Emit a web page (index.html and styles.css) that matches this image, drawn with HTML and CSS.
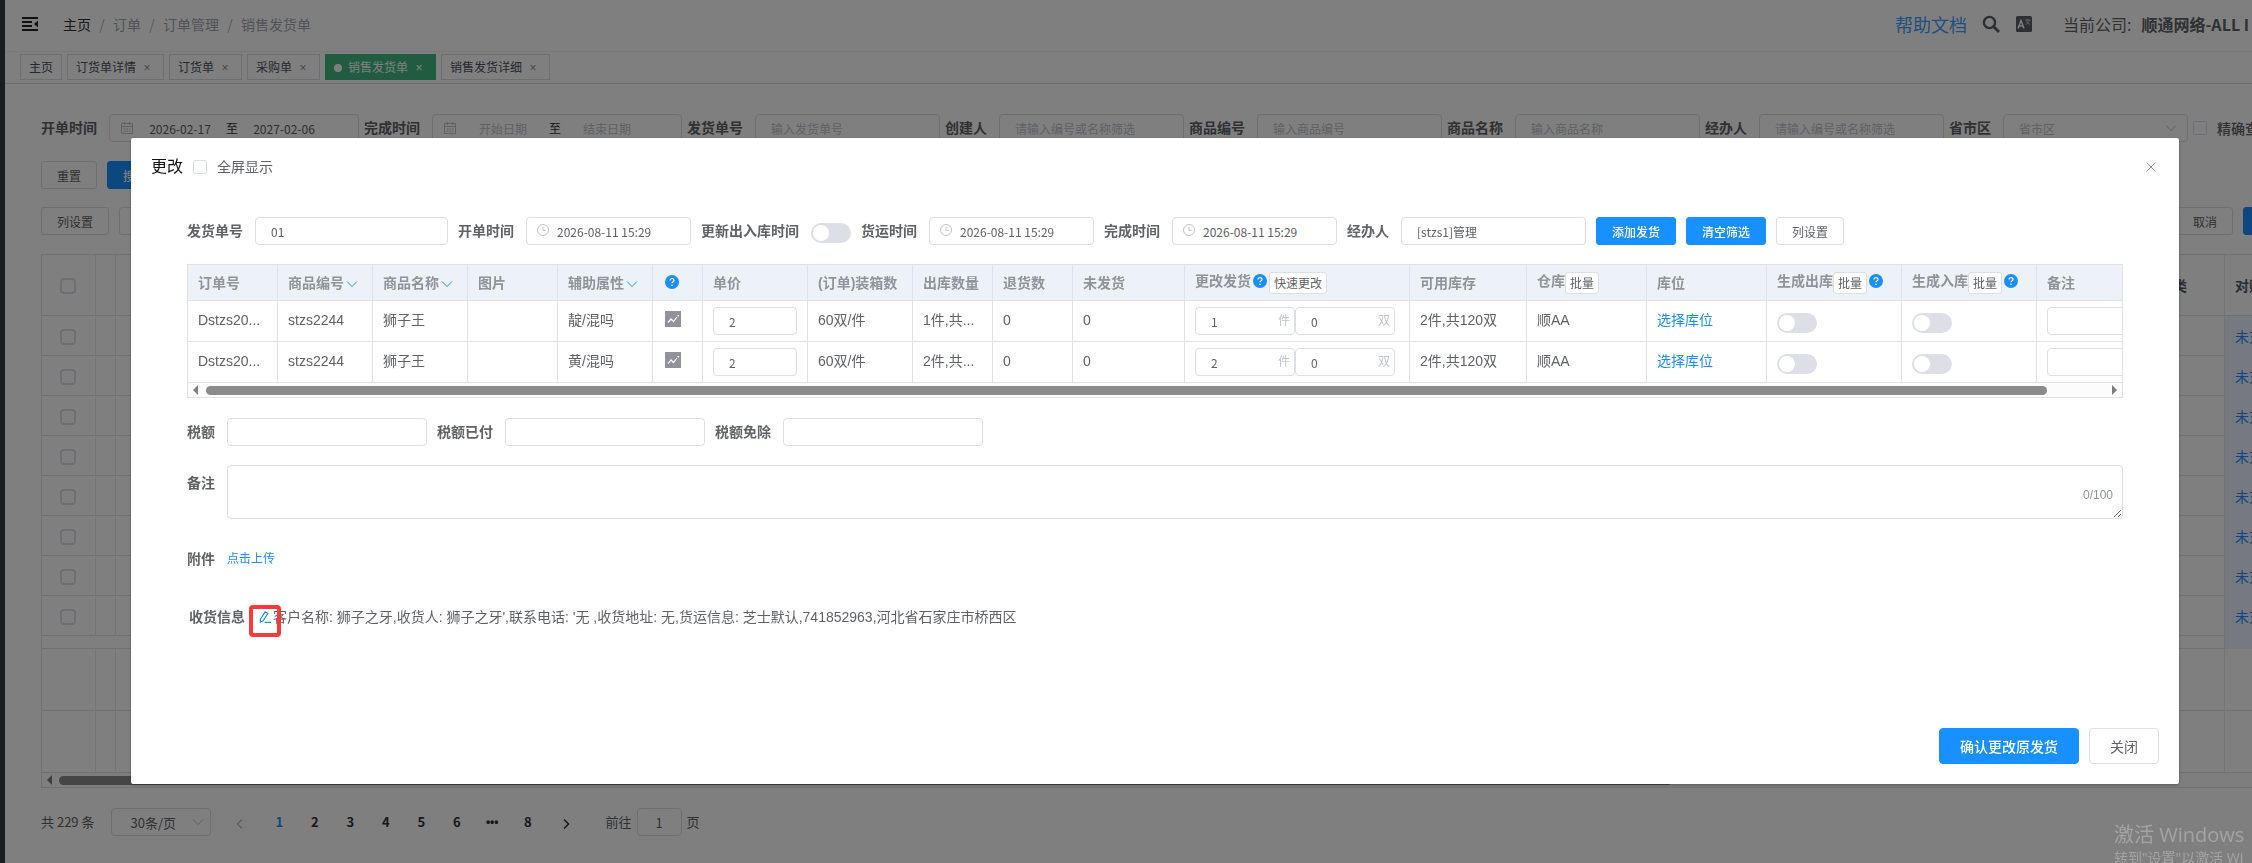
FILE: index.html
```
<!DOCTYPE html>
<html lang="zh-CN">
<head>
    <meta charset="UTF-8">
    <meta name="viewport" content="width=device-width, initial-scale=1.0">
    <title>销售发货单</title>

    <link rel="stylesheet" href="styles.css">
</head>

<body>

    <!-- shared icons -->
    <svg class="sprite" aria-hidden="true">
        <symbol id="i-clock" viewBox="0 0 14 14"><circle cx="7" cy="7" r="5.5" fill="none" stroke="currentColor"/><path d="M7 3.8v3.7h2.6" fill="none" stroke="currentColor"/></symbol>
        <symbol id="i-date" viewBox="0 0 14 14"><path d="M1.5 2.5h11v10h-11zM1.5 5.5h11M4.5 1v3M9.5 1v3M3.5 8h2M6.2 8h2M9 8h1.5M3.5 10.3h2M6.2 10.3h2M9 10.3h1.5" fill="none" stroke="currentColor"/></symbol>
        <symbol id="i-down" viewBox="0 0 14 14"><path d="M2 4.5l5 5 5-5" fill="none" stroke="currentColor"/></symbol>
        <symbol id="i-help" viewBox="0 0 14 14"><circle cx="7" cy="7" r="7" fill="#1890ff"/><path d="M5 5.6C5 4.300 5.900 3.600 7 3.600s2 .7 2 1.800c0 1.300-2 1.400-2 2.900" fill="none" stroke="#fff" stroke-width="1.200"/><circle cx="7" cy="10.300" r=".8" fill="#fff"/></symbol>
        <symbol id="i-chart" viewBox="0 0 16 16"><path d="M0 0h16v16H0z" fill="#909399"/><path d="M3 11.500l3-3.500 2.500 2.500 3.500-4.500" fill="none" stroke="#fff" stroke-width="1.200"/><path d="M12.500 4h1.500v1.500h-1.500z" fill="#fff"/></symbol>
    </svg>

    <div class="layout">
        <aside class="sidebar"></aside>

        <div class="page">
            <header class="navbar">
                <svg class="hamburger" viewBox="0 0 16 14"><path d="M0 1h16M0 5h10M0 9h10M0 13h16" stroke="#222" stroke-width="2"/><path d="M16 3.500v7L12 7z" fill="#222"/></svg>
                <nav class="breadcrumb">
                    <a href="#" class="home">主页</a><i>/</i><span>订单</span><i>/</i><span>订单管理</span><i>/</i><span>销售发货单</span>
                </nav>
                <div class="nav-right">
                    <a href="#" class="doc-link">帮助文档</a>
                    <svg class="nav-icon" viewBox="0 0 18 18"><circle cx="7.500" cy="7.500" r="5.600" fill="none" stroke="#5a5e66" stroke-width="2.400"/><path d="M11.500 11.500l5.500 5.500" stroke="#5a5e66" stroke-width="2.800"/></svg>
                    <svg class="lang-icon" viewBox="0 0 16 16"><rect width="16" height="16" rx="1.500" fill="#5a5e66"/><path d="M2 12.500L5 4.500l3 8M3 10h4" fill="none" stroke="#fff" stroke-width="1.400"/><path d="M9 4h5.500M11.700 2.800V4M9.700 8.300c2-.9 3.300-2.300 3.600-4.300M10.300 4.500c.5 1.800 1.800 3 3.800 3.800" fill="none" stroke="#ddd" stroke-width=".8"/></svg>
                    <span class="company">当前公司:</span>
                    <b class="company-name">顺通网络-ALL I</b>
                </div>
            </header>

            <div class="tags">
                <a href="#" class="tag">主页</a>
                <a href="#" class="tag">订货单详情<i>×</i></a>
                <a href="#" class="tag">订货单<i>×</i></a>
                <a href="#" class="tag">采购单<i>×</i></a>
                <a href="#" class="tag active">销售发货单<i>×</i></a>
                <a href="#" class="tag">销售发货详细<i>×</i></a>
            </div>

            <main class="content">
                <div class="filters">
                    <div class="field">
                        <label for="fOpen">开单时间</label>
                        <div class="range"><svg><use href="#i-date"/></svg><input id="fOpen" type="text" value="2026-02-17"><span>至</span><input type="text" value="2027-02-06" aria-label="开单时间"></div>
                    </div>
                    <div class="field">
                        <label for="fDone">完成时间</label>
                        <div class="range"><svg><use href="#i-date"/></svg><input id="fDone" type="text" placeholder="开始日期"><span>至</span><input type="text" placeholder="结束日期" aria-label="完成时间"></div>
                    </div>
                    <div class="field"><label for="fNo">发货单号</label><input id="fNo" class="input w185" type="text" placeholder="输入发货单号"></div>
                    <div class="field"><label for="fMaker">创建人</label><input id="fMaker" class="input w185" type="text" placeholder="请输入编号或名称筛选"></div>
                    <div class="field"><label for="fCode">商品编号</label><input id="fCode" class="input w185" type="text" placeholder="输入商品编号"></div>
                    <div class="field"><label for="fName">商品名称</label><input id="fName" class="input w185" type="text" placeholder="输入商品名称"></div>
                    <div class="field"><label for="fAgent">经办人</label><input id="fAgent" class="input w185" type="text" placeholder="请输入编号或名称筛选"></div>
                    <div class="field">
                        <label for="fArea">省市区</label>
                        <div class="select w185"><select id="fArea" class="empty"><option>省市区</option></select><svg><use href="#i-down"/></svg></div>
                    </div>
                    <label class="check"><input type="checkbox">精确查</label>
                </div>

                <div class="btn-row search-row">
                    <button class="btn">重置</button>
                    <button class="btn primary">搜索</button>
                </div>

                <div class="btn-row tool-row">
                    <button class="btn">列设置</button>
                    <button class="btn">导出</button>
                    <button class="btn push">取消</button>
                    <button class="btn primary">确定</button>
                </div>

                <div class="list">
                    <table class="list-table">
                        <colgroup><col class="c-check"><col class="c-tree"><col><col class="c-type"><col class="c-state"></colgroup>
                        <thead>
                            <tr><th><input type="checkbox" aria-label="全选"></th><th></th><th></th><th>分类</th><th>对账</th></tr>
                        </thead>
                        <tbody>
                            <tr><td><input type="checkbox" aria-label="选择"></td><td></td><td></td><td></td><td class="state"><a href="#">未对</a></td></tr>
                            <tr><td><input type="checkbox" aria-label="选择"></td><td></td><td></td><td></td><td class="state"><a href="#">未对</a></td></tr>
                            <tr><td><input type="checkbox" aria-label="选择"></td><td></td><td></td><td></td><td class="state"><a href="#">未对</a></td></tr>
                            <tr><td><input type="checkbox" aria-label="选择"></td><td></td><td></td><td></td><td class="state"><a href="#">未对</a></td></tr>
                            <tr><td><input type="checkbox" aria-label="选择"></td><td></td><td></td><td></td><td class="state"><a href="#">未对</a></td></tr>
                            <tr><td><input type="checkbox" aria-label="选择"></td><td></td><td></td><td></td><td class="state"><a href="#">未对</a></td></tr>
                            <tr><td><input type="checkbox" aria-label="选择"></td><td></td><td></td><td></td><td class="state"><a href="#">未对</a></td></tr>
                            <tr><td><input type="checkbox" aria-label="选择"></td><td></td><td></td><td></td><td class="state"><a href="#">未对</a></td></tr>
                            <tr class="gap-row"><td colspan="4"></td><td class="state"></td></tr>
                        </tbody>
                        <tfoot>
                            <tr><td></td><td></td><td></td><td></td><td></td></tr>
                            <tr><td></td><td></td><td></td><td></td><td></td></tr>
                        </tfoot>
                    </table>
                    <div class="scrollbar list-scroll"><i class="arrow-left"></i><span class="thumb"></span></div>
                </div>

                <div class="pagination">
                    <span class="total">共 229 条</span>
                    <div class="select size"><select aria-label="每页条数"><option>30条/页</option></select><svg><use href="#i-down"/></svg></div>
                    <button class="pager-arrow" disabled aria-label="上一页"><svg viewBox="0 0 12 12"><path d="M8 1.500L3.500 6 8 10.500" fill="none" stroke="currentColor" stroke-width="1.500"/></svg></button>
                    <ul class="pager">
                        <li class="active">1</li><li>2</li><li>3</li><li>4</li><li>5</li><li>6</li><li class="more">•••</li><li>8</li>
                    </ul>
                    <button class="pager-arrow" aria-label="下一页"><svg viewBox="0 0 12 12"><path d="M4 1.500L8.500 6 4 10.500" fill="none" stroke="currentColor" stroke-width="1.500"/></svg></button>
                    <label class="jump">前往<input type="text" value="1">页</label>
                </div>
            </main>
        </div>
    </div>

    <div class="overlay">
        <div class="dialog" role="dialog" aria-labelledby="dlgTitle">
            <div class="dialog-header">
                <span id="dlgTitle" class="dialog-title">更改</span>
                <label class="check"><input type="checkbox">全屏显示</label>
                <button class="close" aria-label="关闭"><svg viewBox="0 0 10 10"><path d="M.5.5l9 9M9.500.5l-9 9" stroke="#909399" fill="none"/></svg></button>
            </div>

            <div class="dialog-body">
                <div class="form-row">
                    <div class="field"><label for="no">发货单号</label><input id="no" class="input w193" type="text" value="01"></div>
                    <div class="field"><label for="openTime">开单时间</label><div class="time"><svg><use href="#i-clock"/></svg><input id="openTime" class="input" type="text" value="2026-08-11 15:29"></div></div>
                    <div class="field"><label for="upd">更新出入库时间</label><input id="upd" class="switch" type="checkbox"></div>
                    <div class="field"><label for="shipTime">货运时间</label><div class="time"><svg><use href="#i-clock"/></svg><input id="shipTime" class="input" type="text" value="2026-08-11 15:29"></div></div>
                    <div class="field"><label for="doneTime">完成时间</label><div class="time"><svg><use href="#i-clock"/></svg><input id="doneTime" class="input" type="text" value="2026-08-11 15:29"></div></div>
                    <div class="field"><label for="agent">经办人</label><input id="agent" class="input w185" type="text" value="[stzs1]管理"></div>
                    <button class="btn primary">添加发货</button>
                    <button class="btn primary">清空筛选</button>
                    <button class="btn">列设置</button>
                </div>

                <div class="goods">
                    <div class="goods-view">
                        <table class="goods-table">
                            <colgroup>
                                <col class="w90"><col class="w95"><col class="w95"><col class="w90"><col class="w95"><col class="w50"><col class="w105"><col class="w105"><col class="w80"><col class="w80"><col class="w112"><col class="w225"><col class="w117"><col class="w120"><col class="w120"><col class="w135"><col class="w135"><col>
                            </colgroup>
                            <thead>
                                <tr>
                                    <th>订单号</th>
                                    <th>商品编号<svg class="sort"><use href="#i-down"/></svg></th>
                                    <th>商品名称<svg class="sort"><use href="#i-down"/></svg></th>
                                    <th>图片</th>
                                    <th>辅助属性<svg class="sort"><use href="#i-down"/></svg></th>
                                    <th><svg class="help"><use href="#i-help"/></svg></th>
                                    <th>单价</th>
                                    <th>(订单)装箱数</th>
                                    <th>出库数量</th>
                                    <th>退货数</th>
                                    <th>未发货</th>
                                    <th>更改发货<svg class="help"><use href="#i-help"/></svg><button class="mini">快速更改</button></th>
                                    <th>可用库存</th>
                                    <th>仓库<button class="mini">批量</button></th>
                                    <th>库位</th>
                                    <th>生成出库<button class="mini">批量</button><svg class="help"><use href="#i-help"/></svg></th>
                                    <th>生成入库<button class="mini">批量</button><svg class="help"><use href="#i-help"/></svg></th>
                                    <th>备注</th>
                                </tr>
                            </thead>
                            <tbody>
                                <tr>
                                    <td>Dstzs20...</td>
                                    <td>stzs2244</td>
                                    <td>狮子王</td>
                                    <td></td>
                                    <td>靛/混吗</td>
                                    <td><svg class="chart"><use href="#i-chart"/></svg></td>
                                    <td class="edit-cell"><input class="input" type="text" value="2" aria-label="单价"></td>
                                    <td>60双/件</td>
                                    <td>1件,共...</td>
                                    <td>0</td>
                                    <td>0</td>
                                    <td class="edit-cell"><div class="qty"><label><input class="input" type="text" value="1"><span>件</span></label><label><input class="input" type="text" value="0"><span>双</span></label></div></td>
                                    <td>2件,共120双</td>
                                    <td>顺AA</td>
                                    <td><a href="#">选择库位</a></td>
                                    <td class="edit-cell"><input class="switch" type="checkbox" aria-label="生成出库"></td>
                                    <td class="edit-cell"><input class="switch" type="checkbox" aria-label="生成入库"></td>
                                    <td class="edit-cell"><input class="input" type="text" aria-label="备注"></td>
                                </tr>
                                <tr>
                                    <td>Dstzs20...</td>
                                    <td>stzs2244</td>
                                    <td>狮子王</td>
                                    <td></td>
                                    <td>黄/混吗</td>
                                    <td><svg class="chart"><use href="#i-chart"/></svg></td>
                                    <td class="edit-cell"><input class="input" type="text" value="2" aria-label="单价"></td>
                                    <td>60双/件</td>
                                    <td>2件,共...</td>
                                    <td>0</td>
                                    <td>0</td>
                                    <td class="edit-cell"><div class="qty"><label><input class="input" type="text" value="2"><span>件</span></label><label><input class="input" type="text" value="0"><span>双</span></label></div></td>
                                    <td>2件,共120双</td>
                                    <td>顺AA</td>
                                    <td><a href="#">选择库位</a></td>
                                    <td class="edit-cell"><input class="switch" type="checkbox" aria-label="生成出库"></td>
                                    <td class="edit-cell"><input class="switch" type="checkbox" aria-label="生成入库"></td>
                                    <td class="edit-cell"><input class="input" type="text" aria-label="备注"></td>
                                </tr>
                            </tbody>
                        </table>
                    </div>
                    <div class="scrollbar goods-scroll"><i class="arrow-left"></i><div class="track"><span class="thumb"></span></div><i class="arrow-right"></i></div>
                </div>

                <div class="form-row tax-row">
                    <div class="field"><label for="tax">税额</label><input id="tax" class="input w200" type="text"></div>
                    <div class="field"><label for="taxPaid">税额已付</label><input id="taxPaid" class="input w200" type="text"></div>
                    <div class="field"><label for="taxFree">税额免除</label><input id="taxFree" class="input w200" type="text"></div>
                </div>

                <div class="field remark">
                    <label for="remark">备注</label>
                    <div class="textarea"><textarea id="remark"></textarea><span class="count">0/100</span></div>
                </div>

                <div class="field attach">
                    <b>附件</b>
                    <a href="#">点击上传</a>
                </div>

                <div class="receiver">
                    <b>收货信息</b>
                    <button class="edit" aria-label="编辑"><svg viewBox="0 0 12 12"><path d="M1.500 8L6.200.8l2.600 1.700L4.200 9.700 1.300 11zM5.500 11.300h6.500" fill="none" stroke="#1890ff" stroke-width="1.200"/></svg><span class="mark"></span></button>
                    <span>客户名称: 狮子之牙,收货人: 狮子之牙',联系电话: '无 ,收货地址: 无,货运信息: 芝士默认,741852963,河北省石家庄市桥西区</span>
                </div>
            </div>

            <div class="dialog-footer">
                <button class="btn primary large">确认更改原发货</button>
                <button class="btn large">关闭</button>
            </div>
        </div>
    </div>

    <div class="watermark">
        <p class="wm-title">激活 Windows</p>
        <p>转到"设置"以激活 Wi</p>
    </div>

</body>
</html>
```
FILE: styles.css
```
*{
    box-sizing: border-box;
    margin: 0;
    padding: 0;
}

body{
    height: 100vh;
    overflow: hidden;
    font-family: "Liberation Sans", "Noto Sans CJK SC", sans-serif;
    font-size: 14px;
    line-height: 20px;
    color: #606266;
    background: #fff;
}

a{
    color: #1890ff;
    text-decoration: none;
}

i{
    font-style: normal;
}

input, button, select, textarea{
    font-family: "Noto Sans CJK SC", sans-serif;
    font-size: 12px;
    color: #606266;
    outline: none;
}

::placeholder{
    color: #c0c4cc;
}

.sprite{
    display: none;
}

/* layout */

.layout{
    display: flex;
    height: 100vh;
}

.sidebar{
    flex: 0 0 5px;
    background: #36383f;
}

.page{
    flex: 1;
    min-width: 0;
    overflow: hidden;
    font-family: "Noto Sans CJK SC", sans-serif;
}

.navbar{
    display: flex;
    align-items: center;
    height: 52px;
    padding: 0 0 4px 17px;
    border-bottom: 1px solid #f2f2f4;
    white-space: nowrap;
}

.hamburger{
    width: 16px;
    height: 14px;
    margin-right: 25px;
}

.breadcrumb{
    display: flex;
    color: #97a8be;
}

.breadcrumb .home{
    color: #303133;
}

.breadcrumb span{
    color: #a2a7b0;
}

.breadcrumb i{
    width: 22px;
    text-align: center;
    color: #b0b4bc;
}

.nav-right{
    display: flex;
    align-items: center;
    flex: 0 0 357px;
    margin-left: auto;
    overflow: hidden;
    font-size: 16px;
}

.doc-link{
    font-size: 18px;
    color: #409eff;
}

.nav-icon{
    width: 18px;
    height: 18px;
    margin-left: 15px;
}

.lang-icon{
    width: 16px;
    height: 16px;
    margin: 0 31px 0 16px;
}

.company-name{
    margin-left: 10px;
}

.tags{
    display: flex;
    gap: 5px;
    height: 32px;
    padding: 2px 15px 0;
    border-bottom: 1px solid #d8dce5;
}

.tag{
    height: 26px;
    padding: 0 8px;
    border: 1px solid #d8dce5;
    font-size: 12px;
    line-height: 24px;
    color: #495060;
}

.tag i{
    display: inline-block;
    width: 16px;
    margin-left: 3px;
    text-align: center;
    font-family: "Liberation Sans", sans-serif;
    color: #909399;
}

.tag.active{
    background: #42b983;
    border-color: #42b983;
    color: #fff;
}

.tag.active i{
    color: #fff;
}

.tag.active::before{
    content: "";
    display: inline-block;
    width: 8px;
    height: 8px;
    margin-right: 6px;
    border-radius: 50%;
    background: #fff;
}

.content{
    padding: 30px 0 0 36px;
}

/* controls */

.field{
    display: flex;
    align-items: center;
    gap: 12px;
    white-space: nowrap;
}

.field > label, .field > b, .receiver b{
    flex: none;
    font-weight: 700;
    color: #606266;
}

.input{
    width: 100%;
    height: 28px;
    padding: 0 15px;
    border: 1px solid #dcdfe6;
    border-radius: 4px;
    background: #fff;
}

.w185{
    width: 185px;
}

.w193{
    width: 193px;
}

.w200{
    width: 200px;
}

.select{
    position: relative;
}

.select select{
    width: 100%;
    height: 28px;
    padding: 0 15px;
    appearance: none;
    border: 1px solid #dcdfe6;
    border-radius: 4px;
    background: #fff;
}

.select select.empty{
    color: #c0c4cc;
}

.select svg{
    position: absolute;
    right: 10px;
    top: 7px;
    width: 14px;
    height: 14px;
    color: #c0c4cc;
}

.check{
    display: flex;
    align-items: center;
    gap: 10px;
    white-space: nowrap;
}

.check input, .list-table input{
    width: 14px;
    height: 14px;
    appearance: none;
    border: 1px solid #dcdfe6;
    border-radius: 2px;
    background: #fff;
}

.switch{
    display: block;
    width: 40px;
    height: 20px;
    margin-top: 3px;
    appearance: none;
    border-radius: 10px;
    background: #dcdfe6;
}

.switch::before{
    content: "";
    display: block;
    width: 16px;
    height: 16px;
    margin: 2px;
    border-radius: 50%;
    background: #fff;
}

.btn{
    height: 28px;
    padding: 0 15px;
    border: 1px solid #dcdfe6;
    border-radius: 3px;
    background: #fff;
    cursor: pointer;
}

.btn.primary{
    background: #1890ff;
    border-color: #1890ff;
    color: #fff;
    font-weight: 500;
}

.btn.large{
    height: 36px;
    padding: 0 20px;
    border-radius: 4px;
    font-size: 14px;
}

/* list page */

.filters{
    display: flex;
    align-items: center;
    gap: 5px;
}

.filters .field > label{
    line-height: 26px;
    padding-bottom: 2px;
}

.filters .check{
    font-weight: 500;
}

.range{
    display: flex;
    align-items: center;
    width: 250px;
    height: 28px;
    padding-left: 10px;
    border: 1px solid #dcdfe6;
    border-radius: 4px;
    font-size: 12px;
    color: #303133;
}

.range svg{
    width: 14px;
    height: 14px;
    margin-right: 6px;
    color: #c0c4cc;
}

.range input{
    width: 80px;
    border: 0;
    background: none;
    text-align: center;
}

.range span{
    width: 24px;
    text-align: center;
}

.btn-row{
    display: flex;
    gap: 10px;
}

.search-row{
    margin-top: 19px;
}

.tool-row{
    margin: 18px -47px 0 0;
}

.push{
    margin-left: auto;
}

.list{
    margin-top: 19px;
    border: 1px solid #dfe3ea;
    border-right: 0;
}

.list-table{
    width: 100%;
    table-layout: fixed;
    border-collapse: separate;
    border-spacing: 0;
}

.c-check{
    width: 54px;
}

.c-tree{
    width: 20px;
}

.c-type{
    width: 76px;
}

.c-state{
    width: 27px;
}

.list-table th, .list-table td{
    height: 40px;
    padding: 0 0 0 10px;
    border-right: 1px solid #e6e9ef;
    border-bottom: 1px solid #dfe3ea;
    text-align: left;
    white-space: nowrap;
    overflow: hidden;
}

.list-table th:last-child, .list-table td:last-child{
    border-right: 0;
}

.list-table th{
    height: 61px;
    color: #515a6e;
}

.list-table th:first-child, .list-table td:first-child{
    padding-left: 18px;
}

.list-table input{
    display: block;
    width: 16px;
    height: 16px;
    margin-top: 2px;
    border: 2px solid #dcdfe6;
    border-radius: 4px;
}

.list-table .gap-row td{
    height: 13px;
}

.list-table tfoot td{
    height: 62px;
}

.list-table .state{
    background: #ecf3ff;
    border-bottom-color: #ecf3ff;
}

/* scrollbars */

.scrollbar{
    display: flex;
    align-items: center;
    height: 14px;
    background: #fcfcfc;
}

.scrollbar .thumb{
    display: block;
    height: 9px;
    border-radius: 5px;
    background: #8b8b8b;
}

.arrow-left, .arrow-right{
    border: 5px solid transparent;
}

.arrow-left{
    margin-left: 5px;
    border-left-width: 0;
    border-right-color: #7f7f7f;
}

.arrow-right{
    margin-right: 5px;
    border-right-width: 0;
    border-left-color: #7f7f7f;
}

.list-scroll .thumb{
    width: 73%;
    margin-left: 7px;
}

.track{
    flex: 1;
    margin: 0 8px;
}

.track .thumb{
    width: 97%;
}

/* pagination */

.pagination{
    display: flex;
    align-items: center;
    height: 28px;
    margin-top: 20px;
    font-size: 13px;
}

.size{
    width: 100px;
    margin: 0 8px 0 17px;
}

.size select{
    padding-left: 18px;
    font-size: 13px;
}

.size svg{
    right: 6px;
}

.pager-arrow{
    width: 42px;
    border: 0;
    background: none;
    color: #303133;
}

.pager-arrow:disabled{
    color: #c0c4cc;
}

.pager-arrow svg{
    width: 12px;
    height: 12px;
    vertical-align: middle;
}

.pager{
    display: flex;
    width: 284px;
    list-style: none;
    font-weight: 700;
    color: #303133;
}

.pager li{
    flex: 1;
    text-align: center;
}

.pager .active{
    color: #1890ff;
}

.pager .more{
    font-family: "Liberation Sans", sans-serif;
    font-size: 12px;
}

.jump{
    display: flex;
    align-items: center;
    gap: 5px;
    margin-left: 18px;
}

.jump input{
    width: 45px;
    height: 28px;
    border: 1px solid #dcdfe6;
    border-radius: 4px;
    font-size: 13px;
    text-align: center;
}

/* dialog */

.overlay{
    position: fixed;
    inset: 0;
    display: flex;
    padding: 138px 73px 79px 131px;
    background: rgba(0, 0, 0, 0.5);
}

.dialog{
    flex: 1;
    min-width: 0;
    display: flex;
    flex-direction: column;
    border-radius: 2px;
    background: #fff;
    box-shadow: 0 1px 3px rgba(0, 0, 0, 0.3);
}

.dialog-header{
    display: flex;
    align-items: center;
    padding: 19px 23px 0 20px;
}

.dialog-title{
    margin-right: 10px;
    font-size: 16px;
    color: #111;
}

.close{
    width: 10px;
    height: 10px;
    margin-left: auto;
    border: 0;
    background: none;
}

.close svg{
    display: block;
}

.dialog-body{
    flex: 1;
    padding: 40px 56px 0;
}

.form-row{
    display: flex;
    align-items: center;
    gap: 10px;
}

.time{
    position: relative;
    width: 165px;
}

.time svg{
    position: absolute;
    left: 10px;
    top: 6px;
    width: 14px;
    height: 14px;
    color: #c0c4cc;
}

.time .input{
    padding: 0 5px 0 30px;
}

.goods{
    margin-top: 19px;
    border: 1px solid #dfe3e8;
}

.goods-view{
    overflow: hidden;
}

.goods-table{
    width: 2000px;
    table-layout: fixed;
    border-collapse: separate;
    border-spacing: 0;
}

.w50{
    width: 50px;
}

.w80{
    width: 80px;
}

.w90{
    width: 90px;
}

.w95{
    width: 95px;
}

.w105{
    width: 105px;
}

.w112{
    width: 112px;
}

.w117{
    width: 117px;
}

.w120{
    width: 120px;
}

.w135{
    width: 135px;
}

.w225{
    width: 225px;
}

.goods-table th, .goods-table td{
    height: 41px;
    padding: 0 10px 2px;
    border-right: 1px solid #dfe3e8;
    border-bottom: 1px solid #dfe3e8;
    text-align: left;
    white-space: nowrap;
    overflow: hidden;
    text-overflow: ellipsis;
}

.goods-table .edit-cell{
    padding-bottom: 0;
}

.goods-table th{
    height: 36px;
    padding: 0 0 0 10px;
    background: #edf1f8;
    color: #909399;
}

.goods-table th svg, .goods-table th button{
    vertical-align: middle;
}

.sort{
    width: 14px;
    height: 14px;
    margin-left: 1px;
    color: #1890ff;
}

.help{
    width: 14px;
    height: 14px;
    margin: 0 2px 4px;
}

.chart{
    display: block;
    width: 16px;
    height: 16px;
    margin: 0 0 2px 2px;
}

.mini{
    height: 22px;
    padding: 0 4px;
    border: 1px solid #dcdfe6;
    border-radius: 3px;
    background: #fff;
    line-height: 20px;
}

.qty{
    display: flex;
}

.qty label{
    position: relative;
    width: 100px;
}

.qty span{
    position: absolute;
    right: 5px;
    top: 4px;
    font-size: 12px;
    color: #c0c4cc;
}

.tax-row{
    margin-top: 20px;
}

.remark{
    align-items: flex-start;
    margin-top: 19px;
}

.remark label{
    margin-top: 8px;
}

.textarea{
    position: relative;
    flex: 1;
}

.textarea textarea{
    display: block;
    width: 100%;
    height: 54px;
    padding: 5px 15px;
    border: 1px solid #dcdfe6;
    border-radius: 4px;
    resize: vertical;
}

.count{
    position: absolute;
    right: 10px;
    bottom: 14px;
    font-size: 12px;
    color: #909399;
}

.attach{
    margin-top: 30px;
}

.attach a{
    font-size: 12px;
}

.receiver{
    display: flex;
    align-items: center;
    margin-top: 38px;
    padding-left: 2px;
    white-space: nowrap;
}

.edit{
    position: relative;
    width: 12px;
    height: 12px;
    margin: 0 2px 0 14px;
    border: 0;
    background: none;
}

.edit svg{
    display: block;
}

/* red frame round the edit icon */
.mark{
    position: absolute;
    left: -10px;
    top: -6px;
    width: 32px;
    height: 32px;
    border: 4px solid #f83a3a;
    border-radius: 4px;
}

.dialog-footer{
    display: flex;
    justify-content: flex-end;
    gap: 10px;
    padding: 0 20px 20px;
}

.watermark{
    position: fixed;
    left: calc(100vw - 138px);
    top: calc(100vh - 41px);
    font-family: "Open Sans", "Noto Sans CJK SC", sans-serif;
    white-space: nowrap;
    font-size: 14px;
    line-height: 20px;
    color: #a3a3a3;
}

.wm-title{
    font-size: 20px;
    line-height: 26px;
}
```
